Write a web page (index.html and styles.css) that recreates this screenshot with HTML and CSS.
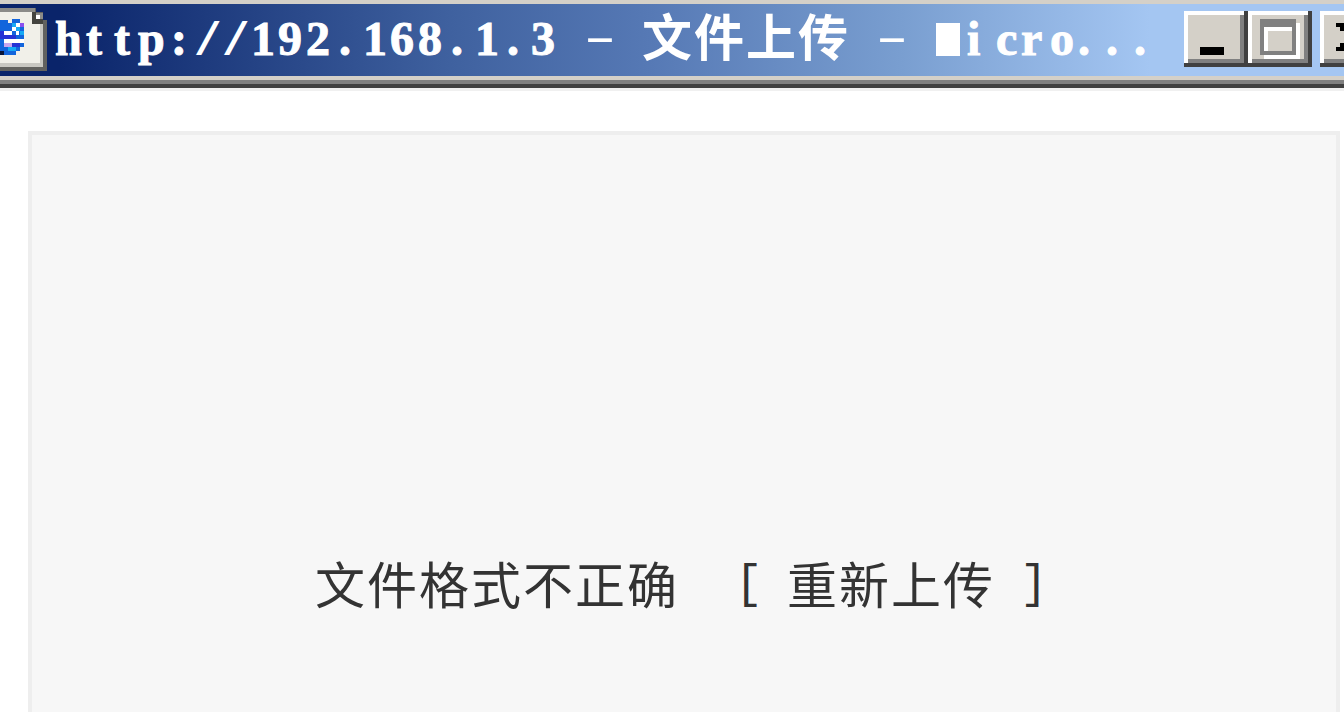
FILE: index.html
```
<!DOCTYPE html>
<html lang="zh-CN">
<head>
  <meta charset="UTF-8" />
  <title>文件上传</title>
  <link rel="stylesheet" href="styles.css">
</head>
<body>

  <header class="titlebar">
    <svg class="page-icon" width="48" height="72" viewBox="0 0 48 72" shape-rendering="crispEdges">
      <path fill="#62625f" d="M0 8h36v4h7v8h4v51H0z"/>
      <path fill="#8b8b88" d="M0 8h35v5h8v54H0z"/>
      <path fill="#f1f0e9" d="M0 12h32v12h11v43H0z"/>
      <path fill="#c9c8c2" d="M40 24h3v43H0v-4h40z"/>
      <path fill="#44443f" d="M32 12h4v7h7v5H32z"/>
      <path fill="#fff" d="M36 15h4v4h-4z"/>
      <!-- browser "e" -->
      <path fill="#1265dc" d="M0 20h8v3h4v-4h8v4h4v24h-4v4h-4v4H0z"/>
      <path fill="#2532d5" d="M0 31h4v8H0zM4 35h12v4H4zM12 43h8v4h-8z"/>
      <path fill="#16a9f5" d="M12 23h4v4h-4zM16 27h4v4h-4zM20 31h4v4h-4zM8 47h8v4H8z"/>
      <path fill="#fff" d="M16 23h4v4h-4zM12 27h4v4h-4zM4 31h8v4H4zM16 31h3v4h-3zM4 39h20v4H4z"/>
      <path fill="#8b50ee" d="M20 23h4v4h-4z"/>
      <path fill="#c9a6ee" d="M4 43h8v4H4z"/>
      <path fill="#071338" d="M0 51h4v4H0z"/>
    </svg>
    <svg class="title" width="1136" height="72" viewBox="48 0 1136 72">
      <rect x="936" y="23" width="24" height="33" fill="#fff"/>
      <text class="latin" y="55" x="55 86 114 138 171">http:</text>
      <text class="slash" y="55" x="194 222">//</text>
      <text class="latin" y="55" x="251 278 306 339 363 390 418 451 475 507 531">192.168.1.3</text>
      <text class="dash" y="53" x="574" textLength="52" lengthAdjust="spacingAndGlyphs">-</text>
      <text class="cjk" y="56" x="642 694 746 798">文件上传</text>
      <text class="dash" y="53" x="866" textLength="52" lengthAdjust="spacingAndGlyphs">-</text>
      <text class="block" y="53" x="937">M</text>
      <text class="latin" y="55" x="967 996 1021 1050 1078 1106 1134">icro...</text>
    </svg>
    <div class="controls">
      <div class="control">
        <svg width="64" height="56" viewBox="0 0 64 56" shape-rendering="crispEdges">
          <path fill="#404040" d="M0 0h64v56H0z"/>
          <path fill="#808080" d="M0 0h60v52H0z"/>
          <path fill="#fff" d="M0 0h60v4H4v48H0z"/>
          <path fill="#d4d0c8" d="M4 4h52v44H4z"/>
          <path d="M16 36h24v8H16z"/>
        </svg>
      </div>
      <div class="control">
        <svg width="64" height="56" viewBox="0 0 64 56" shape-rendering="crispEdges">
          <path fill="#404040" d="M0 0h64v56H0z"/>
          <path fill="#808080" d="M0 0h60v52H0z"/>
          <path fill="#fff" d="M0 0h60v4H4v48H0z"/>
          <path fill="#d4d0c8" d="M4 4h52v44H4z"/>
          <path fill="#fff" d="M16 12h36v36H16z"/>
          <path fill="#808080" d="M12 8h36v36H12z"/>
          <path fill="#fff" d="M16 16h28v24H16z"/>
          <path fill="#d4d0c8" d="M20 20h24v20H20z"/>
        </svg>
      </div>
      <div class="control close">
        <svg width="64" height="56" viewBox="0 0 64 56" shape-rendering="crispEdges">
          <path fill="#404040" d="M0 0h64v56H0z"/>
          <path fill="#fff" d="M0 0h60v4H4v48H0z"/>
          <path fill="#d4d0c8" d="M4 4h56v44H4z"/>
          <path fill="#808080" d="M4 48h56v4H4z"/>
          <path d="M16 12h8v4h4v4h4v12h-4v4h-4v4h-8v-4h4v-4h4v-4h4v-4h-4v-4h-4v-4h-4z"/>
        </svg>
      </div>
    </div>
  </header>

  <main class="content">
    <div class="panel">
      <span class="message">文件格式不正确</span>
      <span class="bracket">[</span>
      <a class="retry">重新上传</a>
      <span class="bracket close-bracket">]</span>
    </div>
  </main>

</body>
</html>
```
FILE: styles.css
```
body {
  margin: 0;
  height: 712px;
  display: flex;
  flex-direction: column;
  overflow: hidden;
  background: #fff;
  font-family: "Noto Sans CJK SC", sans-serif;
}

.titlebar {
  display: flex;
  flex: none;
  height: 72px;
  border-top: 4px solid #d4d0c8;
  border-bottom: 4px solid #d4d0c8;
  background: linear-gradient(90deg, #0a246a 0, #0a246a 60px, #3f619f 450px, #5679b5 650px, #799ed0 900px, #a4c6f2 1150px);
  box-shadow: 0 4px #808080, 0 8px #404040, 0 11px #f0f0f0;
}

.page-icon,
.title {
  flex: none;
  margin-top: -4px;
}

.title {
  fill: #fff;
}

.latin {
  font: bold 48px "Liberation Serif", serif;
  stroke: #fff;
  stroke-width: 1px;
}

.slash {
  font: bold 46px "Liberation Mono", monospace;
}

.dash {
  font: 46px "Liberation Mono", monospace;
}

.block {
  font: bold 38px "Liberation Mono", monospace;
}

.cjk {
  font: bold 50px "Noto Sans CJK SC", sans-serif;
}

.controls {
  display: flex;
  flex: none;
  margin-top: 7px;
}

.control {
  height: 56px;
}

.control svg {
  display: block;
}

.close {
  margin-left: 8px;
}

.content {
  display: flex;
  flex: 1;
  padding: 51px 4px 0 28px;
}

.panel {
  display: flex;
  flex: 1;
  align-items: flex-start;
  box-sizing: border-box;
  padding: 417px 0 0 283px;
  border: 4px solid #eee;
  border-bottom: none;
  background: #f7f7f7;
  color: #333;
  font-size: 50px;
  line-height: 60px;
  white-space: nowrap;
}

.message,
.retry {
  letter-spacing: 2px;
}

.bracket {
  width: 28px;
  margin: 3px 0 0 56px;
  font-family: "Liberation Mono", monospace;
  font-size: 46px;
}

.retry {
  margin-left: 24px;
}

.close-bracket {
  margin-left: 25px;
}
```
